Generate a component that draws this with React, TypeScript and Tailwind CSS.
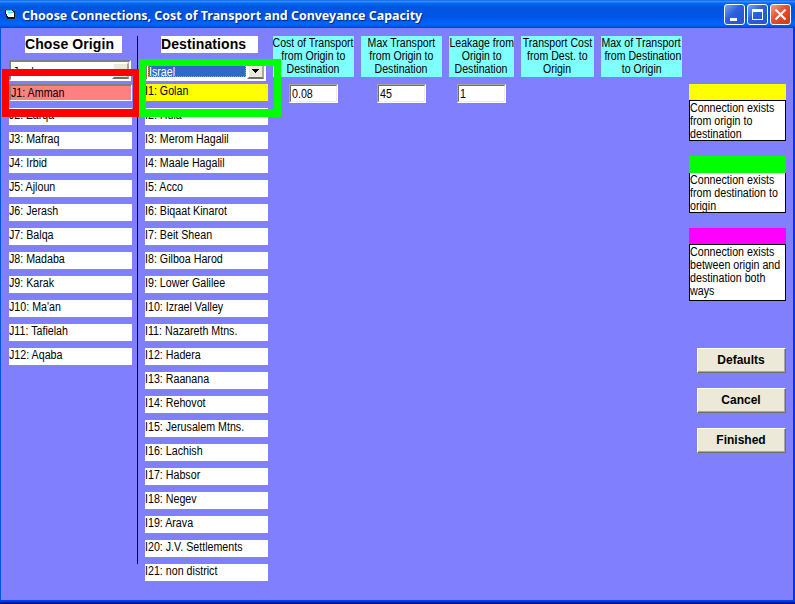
import type { ReactNode } from 'react';

const origins = ['Zarqa', 'Mafraq', 'Irbid', 'Ajloun', 'Jerash', 'Balqa', 'Madaba', 'Karak', "Ma'an", 'Tafielah', 'Aqaba'];
const destinations = [
  'Hula', 'Merom Hagalil', 'Maale Hagalil', 'Acco', 'Biqaat Kinarot', 'Beit Shean', 'Gilboa Harod',
  'Lower Galilee', 'Izrael Valley', 'Nazareth Mtns.', 'Hadera', 'Raanana', 'Rehovot', 'Jerusalem Mtns.',
  'Lachish', 'Habsor', 'Negev', 'Arava', 'J.V. Settlements', 'non district',
];

const columns = [
  { width: 'w-[81px]', lines: ['Cost of Transport', 'from Origin to', 'Destination'] },
  { width: 'w-[81px]', lines: ['Max Transport', 'from Origin to', 'Destination'] },
  { width: 'w-[65px]', lines: ['Leakage from', 'Origin to', 'Destination'] },
  { width: 'w-[73px]', lines: ['Transport Cost', 'from Dest. to', 'Origin'] },
  { width: 'w-[81px]', lines: ['Max of Transport', ' from Destination', 'to Origin'] },
];

const legend = [
  { color: 'bg-[#ffff00] h-[16px]', box: 'h-[41px] border pt-px', gap: 'mb-[15px]', lines: ['Connection exists', 'from origin to', 'destination'] },
  { color: 'bg-[#00ff00] h-[17px]', box: 'h-[40px] border border-t-0 pt-px', gap: 'mb-[15px]', lines: ['Connection exists', 'from destination to', 'origin'] },
  { color: 'bg-[#ff00ff] h-[16px]', box: 'h-[57px] border pt-px', gap: 'mb-[47px]', lines: ['Connection exists', 'between origin and', 'destination both', 'ways'] },
];

function Narrow({ children }: { children: ReactNode }) {
  return <span className="block w-max origin-left scale-x-[0.89] whitespace-pre">{children}</span>;
}

function Row({ children }: { children: ReactNode }) {
  return <div className="h-[17px] w-[123px] shrink-0 bg-white leading-[15px]"><Narrow>{children}</Narrow></div>;
}

function Heading({ children }: { children: ReactNode }) {
  return (
    <div className="ml-4 h-[17px] w-[97px] bg-white text-[14px] font-bold leading-[17px] tracking-[0.1px] whitespace-nowrap">
      {children}
    </div>
  );
}

function Field({ children, className }: { children: ReactNode; className: string }) {
  return (
    <div className={`h-[19px] w-[49px] border border-t-[#aca899] border-l-[#aca899] border-r-white border-b-white ${className}`}>
      <div className="h-full border border-t-[#716f64] border-l-[#716f64] border-r-[#f1efe2] border-b-[#f1efe2] bg-white pl-px leading-[16px]">
        <Narrow>{children}</Narrow>
      </div>
    </div>
  );
}

function Combo({ children, selected, className }: { children: ReactNode; selected?: boolean; className: string }) {
  return (
    <div className={`flex h-[21px] border-2 border-t-[#808080] border-l-[#808080] border-r-white border-b-white bg-white ${className}`}>
      <div className={`m-px flex-1 ${selected ? 'mb-[2px] border border-dotted border-[#d0a040] bg-[#316ac5] leading-[16px] text-white' : 'overflow-hidden pl-px leading-[19px]'}`}>
        <Narrow>{children}</Narrow>
      </div>
      <div className="flex w-[17px] items-center justify-center border-2 border-t-white border-l-white border-r-[#aca899] border-b-[#716f64] bg-[#ece9d8]">
        {selected && <svg width="7" height="4" viewBox="0 0 7 4" shapeRendering="crispEdges"><path d="M0 0h7v1H6v1H5v1H4v1H3V3H2V2H1V1H0z" /></svg>}
      </div>
    </div>
  );
}

function TitleBar() {
  const button = 'flex h-[21px] w-[21px] items-center justify-center rounded-[3px] border border-white';
  return (
    <header className="flex h-[28px] items-center bg-[linear-gradient(180deg,#0058e6_0%,#3a93ff_4%,#0468f0_12%,#0055e0_25%,#0055e5_60%,#0066ff_85%,#005be8_93%,#003fc0_100%)] pl-[5px] pr-[4px] pt-px">
      <svg width="13" height="13" viewBox="0 0 13 13" shapeRendering="crispEdges">
        <path d="M9 9h2v1h1v1h-2v1H4v-1h5z" fill="#50607c" />
        <path d="M0 2h8v1h2v8H2V9H1V6H0z" fill="#111" />
        <path d="M1 3h7v1h1v5H3V8H2V6H1z" fill="#fff" />
        <path d="M1 2h6v1H1zM3 4h6v1H3z" fill="#40d8d8" />
      </svg>
      <h1 className="ml-[4px] w-max origin-left scale-x-[0.957] whitespace-pre font-['Noto_Sans',sans-serif] text-[13px] font-bold leading-[20px] text-white [text-shadow:1px_1px_1px_#00237f]">
        Choose Connections, Cost of Transport and Conveyance Capacity
      </h1>
      <div className="ml-auto flex gap-[2px]">
        <div className={`${button} bg-[linear-gradient(135deg,#7da2f0,#2a5fdc_45%,#2456cc)]`}>
          <svg width="15" height="15" viewBox="0 0 15 15" shapeRendering="crispEdges"><path d="M3 11h7v3H3z" fill="#fff" /></svg>
        </div>
        <div className={`${button} bg-[linear-gradient(135deg,#7da2f0,#2a5fdc_45%,#2456cc)]`}>
          <svg width="15" height="15" viewBox="0 0 15 15" shapeRendering="crispEdges"><path d="M2 2h11v11H2zM3 5v7h9V5z" fill="#fff" fillRule="evenodd" /></svg>
        </div>
        <div className={`${button} bg-[linear-gradient(135deg,#f0a088,#e0502c_45%,#c83c14)]`}>
          <svg width="15" height="15" viewBox="0 0 15 15"><path d="M2.5 2.5l10 10M12.5 2.5l-10 10" stroke="#fff" strokeWidth="2.2" /></svg>
        </div>
      </div>
    </header>
  );
}

export default function App() {
  return (
    <div className="relative flex h-[604px] w-[795px] flex-col overflow-hidden bg-[#8080ff] font-['Liberation_Sans',Arial,sans-serif] text-[12px] text-black">
      <TitleBar />
      <main className="flex h-[572px] border-l border-l-[#0054e3] border-r-2 border-r-[#0038dc] pt-2 pl-2">
        <section className="w-[123px]">
          <Heading>Chose Origin</Heading>
          <Combo className="mt-[7px] w-[122px]">Jordan</Combo>
          <div className="mt-[3px] mb-[7px] h-[17px] w-[123px] border-t-2 border-l-2 border-r border-b border-t-[#808080] border-l-[#808080] border-r-white border-b-white bg-[#ff8080] leading-[15px]">
            <Narrow>J1: Amman</Narrow>
          </div>
          <div className="flex flex-col gap-[7px]">
            {origins.map((name, i) => <Row key={name}>{`J${i + 2}: ${name}`}</Row>)}
          </div>
        </section>
        <div className="ml-[5px] h-[528px] w-px bg-black" />
        <section className="ml-[7px] w-[123px]">
          <Heading>Destinations</Heading>
          <Combo selected className="mt-[7px] w-[121px]">Israel</Combo>
          <div className="mt-[3px] mb-[7px] h-[17px] w-[123px] bg-[#ffff00] leading-[15px]"><Narrow>I1: Golan</Narrow></div>
          <div className="flex flex-col gap-[7px]">
            {destinations.map((name, i) => <Row key={name}>{`I${i + 2}: ${name}`}</Row>)}
          </div>
        </section>
        <section className="ml-[5px]">
          <div className="flex gap-[7px]">
            {columns.map((column, i) => (
              <div key={i} className={`${column.width} flex h-[41px] flex-col items-center bg-[#80ffff] pt-px leading-[13px]`}>
                {column.lines.map((line) => (
                  <span key={line} className="-mx-4 block w-max scale-x-[0.88] whitespace-pre">{line}</span>
                ))}
              </div>
            ))}
          </div>
          <div className="mt-[7px] flex">
            <Field className="ml-4">0.08</Field>
            <Field className="ml-[39px]">45</Field>
            <Field className="ml-[31px]">1</Field>
          </div>
        </section>
        <aside className="ml-[7px] w-[97px] pt-12">
          {legend.map((item) => (
            <div key={item.color} className={item.gap}>
              <div className={item.color} />
              <div className={`${item.box} border-black bg-white leading-[13px]`}>
                {item.lines.map((line) => <Narrow key={line}>{line}</Narrow>)}
              </div>
            </div>
          ))}
          <div className="ml-2 flex flex-col gap-[15px]">
            {['Defaults', 'Cancel', 'Finished'].map((label) => (
              <button key={label} className="h-[25px] w-[89px] border border-t-white border-l-white border-r-[#716f64] border-b-[#716f64] bg-[#ece9d8] text-[12px] font-bold">
                <span className="block h-full border-r border-b border-[#aca899] leading-[23px]">{label}</span>
              </button>
            ))}
          </div>
        </aside>
      </main>
      <footer className="h-1 bg-[linear-gradient(180deg,#0048f0_0%,#0038dc_40%,#001090_75%,#000c80_100%)]" />
      <div className="absolute left-[2px] top-[69px] h-[48px] w-[137px] border-[7px] border-r-[6px] border-b-[8px] border-[#ff0000]" />
      <div className="absolute left-[139px] top-[59px] h-[58px] w-[142px] border-[7px] border-b-[8px] border-[#00ff00]" />
    </div>
  );
}
